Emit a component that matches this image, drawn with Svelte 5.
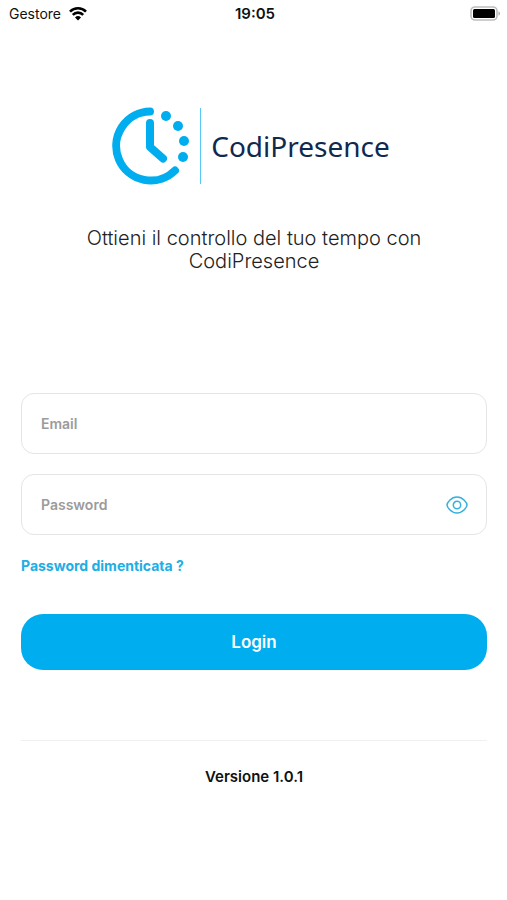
<script lang="ts">
  let email = $state('');
  let password = $state('');
  let showPassword = $state(false);

  const dots = [
    { x: 56, y: 9 },
    { x: 68, y: 19 },
    { x: 74, y: 34 },
    { x: 73, y: 50 }
  ];
</script>

<header class="status">
  <div class="status__carrier">
    <span>Gestore</span>
    <svg width="18" height="14" viewBox="0 0 18 14" aria-hidden="true">
      <path d="M1 4.6a11.4 11.4 0 0 1 16 0M3.8 7.8a7.4 7.4 0 0 1 10.4 0" fill="none" stroke="#000" stroke-width="2.6" />
      <path d="M9 13.4 6 10.4a4.3 4.3 0 0 1 6 0z" />
    </svg>
  </div>
  <time class="status__time">19:05</time>
  <svg class="status__battery" width="31" height="15" viewBox="0 0 31 15" aria-hidden="true">
    <rect x="1" y="1" width="26" height="13" rx="4" fill="#fff" stroke="#bdbdbd" stroke-width="1.6" />
    <rect x="3" y="3" width="22" height="9" rx="1.5" />
    <path d="M28.5 5.3v4.4c2-.8 2-3.6 0-4.4z" fill="#aaa" />
  </svg>
</header>

<main class="page">
  <div class="brand">
    <svg width="80" height="78" viewBox="0 0 80 78" aria-hidden="true">
      <g fill="none" stroke="#00aeef" stroke-linecap="round" stroke-linejoin="round" stroke-width="8">
        <path d="M40 4.5a34.5 34.5 0 1 0 25 59" />
        <path d="M40 16v24l13 11.5" />
      </g>
      {#each dots as dot}
        <circle cx={dot.x} cy={dot.y} r="5" fill="#00aeef" />
      {/each}
    </svg>
    <span class="brand__rule"></span>
    <span class="brand__name">CodiPresence</span>
  </div>

  <h1 class="tagline">Ottieni il controllo del tuo tempo con CodiPresence</h1>

  <form class="login" onsubmit={(e) => e.preventDefault()}>
    <div class="field">
      <input type="email" aria-label="Email" placeholder="Email" bind:value={email} />
    </div>
    <div class="field">
      <input
        type={showPassword ? 'text' : 'password'}
        aria-label="Password"
        placeholder="Password"
        bind:value={password}
      />
      <button
        class="field__toggle"
        type="button"
        aria-label="Mostra password"
        onclick={() => (showPassword = !showPassword)}
      >
        <svg width="22" height="18" viewBox="0 0 22 18" fill="none" stroke="#35b0df" stroke-width="1.5">
          <path d="M1 9C1 7 5 1 11 1s10 6 10 8-4 8-10 8S1 11 1 9z" />
          <circle cx="11" cy="9" r="3.7" />
        </svg>
      </button>
    </div>
    <a class="forgot" href="#recupera">Password dimenticata ?</a>
    <button class="submit" type="submit">Login</button>
  </form>

  <footer class="version">Versione 1.0.1</footer>
</main>

<style>
  :global(body) {
    background: #fff;
    font-family: Inter, 'Liberation Sans', sans-serif;
  }

  .status {
    display: grid;
    grid-template-columns: 1fr auto 1fr;
    align-items: center;
    height: 27px;
    padding: 0 6px 0 9px;
    color: #111;
    font-size: 14px;
  }

  .status__carrier {
    display: flex;
    align-items: center;
    gap: 8px;
  }

  .status__time {
    font-size: 15px;
    font-weight: 600;
  }

  .status__battery {
    justify-self: end;
  }

  .page {
    padding: 80px 20px 0 21px;
  }

  .brand {
    display: flex;
    justify-content: center;
    align-items: center;
    gap: 10px;
    padding-right: 8px;
  }

  .brand__rule {
    width: 1px;
    height: 76px;
    background: #55c8f5;
  }

  .brand__name {
    color: #10294f;
    font-family: 'Noto Sans', 'Open Sans', sans-serif;
    font-size: 28px;
    line-height: 76px;
  }

  .tagline {
    max-width: 360px;
    margin: 42px auto 0;
    color: #222;
    font-size: 20px;
    font-weight: 300;
    line-height: 23px;
    text-align: center;
  }

  .login {
    display: flex;
    flex-direction: column;
    gap: 20px;
    margin-top: 120px;
  }

  .field {
    display: flex;
    align-items: center;
    box-sizing: border-box;
    height: 61px;
    border: 1px solid #e5e5e5;
    border-radius: 13px;
    padding: 0 18px 0 19px;
  }

  .field input {
    flex: 1;
    min-width: 0;
    border: 0;
    outline: 0;
    padding: 0;
    background: none;
    color: #222;
    font: 600 14px Inter, 'Liberation Sans', sans-serif;
  }

  .field input::placeholder {
    color: #9b9b9b;
    opacity: 1;
  }

  .field__toggle {
    display: flex;
    border: 0;
    padding: 0;
    background: none;
  }

  .forgot {
    align-self: flex-start;
    color: #20aee5;
    font-size: 14px;
    font-weight: 700;
    line-height: 22px;
    text-decoration: none;
  }

  .submit {
    height: 56px;
    margin-top: 17px;
    border: 0;
    border-radius: 22px;
    background: #00aeef;
    color: #fff;
    font: 600 17px Inter, 'Liberation Sans', sans-serif;
  }

  .version {
    margin-top: 70px;
    border-top: 1px solid #f0f0f0;
    padding-top: 26px;
    color: #111;
    font-size: 15px;
    font-weight: 600;
    line-height: 20px;
    text-align: center;
  }
</style>
